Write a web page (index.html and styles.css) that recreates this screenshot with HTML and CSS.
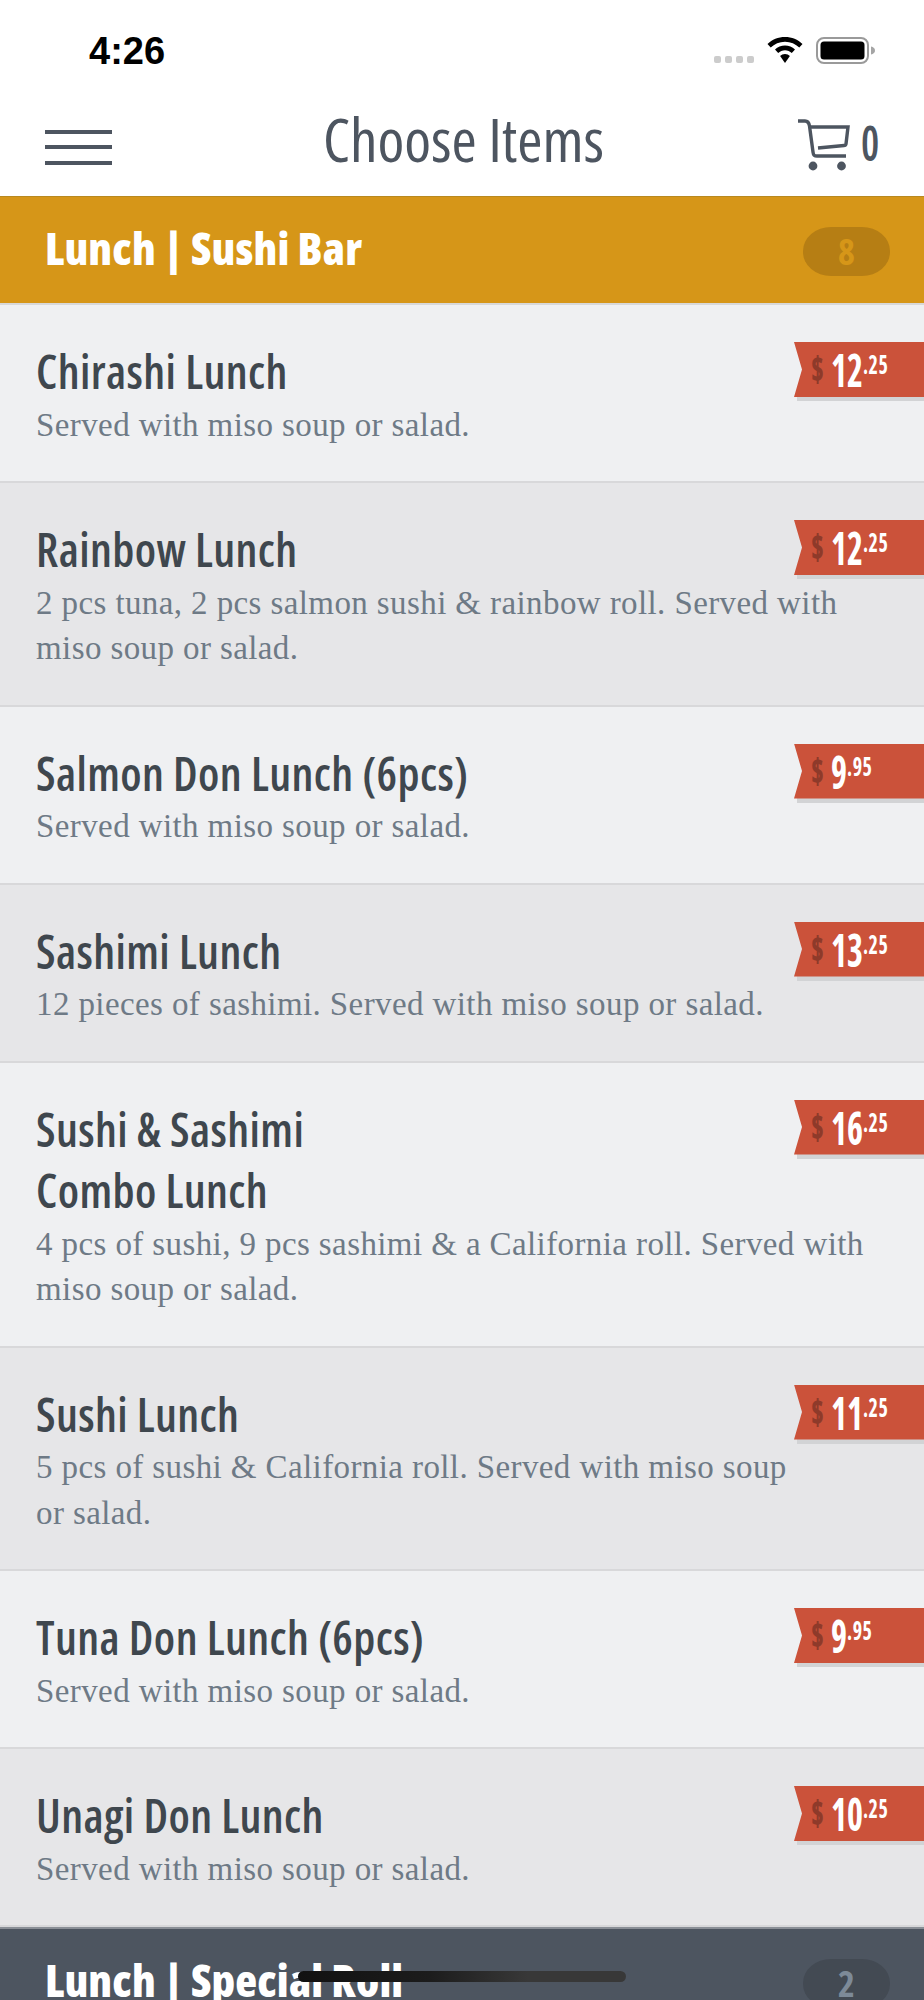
FILE: index.html
```html
<!DOCTYPE html>
<html lang="en">
<head>
<meta charset="utf-8">
<title>Choose Items</title>
<link rel="stylesheet" href="styles.css">
</head>
<body>
<div class="screen">
  <div class="status">
    <span class="time">4:26</span>
    <div class="status-icons">
      <span class="dots"><i></i><i></i><i></i><i></i></span>
      <svg class="wifi" width="36" height="26" viewBox="0 0 36 26"><path d="M18 0C11.200 0 5 2.600 .5 7L3.700 10.500C7.400 6.900 12.400 4.700 18 4.700S28.600 6.900 32.300 10.500L35.500 7C31 2.600 24.800 0 18 0Z" fill="#000"/><path d="M18 8.500C14.200 8.500 10.700 10 8 12.500L11.200 16C13 14.300 15.400 13.200 18 13.200S23 14.300 24.800 16L28 12.500C25.300 10 21.800 8.500 18 8.500Z" fill="#000"/><path d="M18 17C16.100 17 14.400 17.700 13.100 19L18 26L22.900 19C21.600 17.700 19.900 17 18 17Z" fill="#000"/></svg>
      <svg class="battery" width="60" height="28" viewBox="0 0 60 28"><rect x="1" y="1" width="51" height="25" rx="7" fill="none" stroke="#9a9a9a" stroke-width="2"/><rect x="4.500" y="4.500" width="44" height="18" rx="3.500" fill="#000"/><path d="M55 9.500C57.500 10 59 11.500 59 13.500S57.500 17 55 17.500Z" fill="#a5a5a5"/></svg>
    </div>
  </div>
  <header class="topbar">
    <div class="menu"><i></i><i></i><i></i></div>
    <h1 class="page-title"><span class="nar">Choose Items</span></h1>
    <div class="cart">
      <svg width="54" height="54" viewBox="0 0 54 54"><path d="M1 2H8C11 2 12 4 12.500 7L16 33C16.300 36 17 37 20 37H49" fill="none" stroke="#4d5560" stroke-width="3.400"/><path d="M13 8H51L49 25C48.800 26 48 26.500 47 26.500L21 29" fill="none" stroke="#4d5560" stroke-width="3.400"/><circle cx="16" cy="47" r="4.400" fill="#4d5560"/><circle cx="44.500" cy="47" r="4.400" fill="#4d5560"/></svg>
      <span class="nar cart-count">0</span>
    </div>
  </header>
  <section class="group gold">
    <span class="nar group-title">Lunch | Sushi Bar</span>
    <span class="count"><span class="nar">8</span></span>
  </section>
  <article class="item">
    <div class="item-name"><span class="nar">Chirashi Lunch</span></div>
    <p class="item-desc">Served with miso soup or salad.</p>
    <div class="price"><div class="ribbon"><span class="nar price-line"><span class="cur">$</span><b>12</b><sup>.25</sup></span></div></div>
  </article>
  <article class="item alt">
    <div class="item-name"><span class="nar">Rainbow Lunch</span></div>
    <p class="item-desc">2 pcs tuna, 2 pcs salmon sushi &amp; rainbow roll. Served with<br>miso soup or salad.</p>
    <div class="price"><div class="ribbon"><span class="nar price-line"><span class="cur">$</span><b>12</b><sup>.25</sup></span></div></div>
  </article>
  <article class="item">
    <div class="item-name"><span class="nar">Salmon Don Lunch (6pcs)</span></div>
    <p class="item-desc">Served with miso soup or salad.</p>
    <div class="price"><div class="ribbon"><span class="nar price-line"><span class="cur">$</span><b>9</b><sup>.95</sup></span></div></div>
  </article>
  <article class="item alt">
    <div class="item-name"><span class="nar">Sashimi Lunch</span></div>
    <p class="item-desc">12 pieces of sashimi. Served with miso soup or salad.</p>
    <div class="price"><div class="ribbon"><span class="nar price-line"><span class="cur">$</span><b>13</b><sup>.25</sup></span></div></div>
  </article>
  <article class="item">
    <div class="item-name"><span class="nar">Sushi &amp; Sashimi<br>Combo Lunch</span></div>
    <p class="item-desc">4 pcs of sushi, 9 pcs sashimi &amp; a California roll. Served with<br>miso soup or salad.</p>
    <div class="price"><div class="ribbon"><span class="nar price-line"><span class="cur">$</span><b>16</b><sup>.25</sup></span></div></div>
  </article>
  <article class="item alt">
    <div class="item-name"><span class="nar">Sushi Lunch</span></div>
    <p class="item-desc">5 pcs of sushi &amp; California roll. Served with miso soup<br>or salad.</p>
    <div class="price"><div class="ribbon"><span class="nar price-line"><span class="cur">$</span><b>11</b><sup>.25</sup></span></div></div>
  </article>
  <article class="item">
    <div class="item-name"><span class="nar">Tuna Don Lunch (6pcs)</span></div>
    <p class="item-desc">Served with miso soup or salad.</p>
    <div class="price"><div class="ribbon"><span class="nar price-line"><span class="cur">$</span><b>9</b><sup>.95</sup></span></div></div>
  </article>
  <article class="item alt">
    <div class="item-name"><span class="nar">Unagi Don Lunch</span></div>
    <p class="item-desc">Served with miso soup or salad.</p>
    <div class="price"><div class="ribbon"><span class="nar price-line"><span class="cur">$</span><b>10</b><sup>.25</sup></span></div></div>
  </article>
  <section class="group slate">
    <span class="nar group-title">Lunch | Special Roll</span>
    <span class="count"><span class="nar">2</span></span>
  </section>
  <div class="home-bar"></div>
</div>
</body>
</html>
```
FILE: styles.css
```css
* { box-sizing: border-box; }
html, body { margin: 0; padding: 0; background: #fff; }
.screen { position: relative; width: 924px; height: 2000px; overflow: hidden; font-family: "Open Sans", sans-serif; }
.nar { display: inline-block; font-family: "Open Sans", sans-serif; font-stretch: 75%; white-space: nowrap; }
.status { height: 98px; display: flex; justify-content: space-between; padding: 31px 48px 0 89px; }
.time { font-family: "Liberation Sans", sans-serif; font-weight: 700; font-size: 38px; line-height: 40px; color: #000; }
.status-icons { display: flex; align-items: flex-start; gap: 13px; padding-top: 6px; }
.dots { display: flex; gap: 4px; padding-top: 19px; }
.dots i { width: 7px; height: 7px; border-radius: 2px; background: #ccc; }
.topbar { height: 98px; display: grid; grid-template-columns: 1fr auto 1fr; align-items: center; padding: 0 42px 0 45px; }
.menu { display: flex; flex-direction: column; gap: 11.500px; width: 67px; }
.menu i { height: 4px; background: #4d5560; }
.page-title { margin: -16px 0 0; text-align: center; font-weight: 370; font-size: 61px; line-height: 70px; color: #4d5560; }
.cart { display: flex; align-items: flex-start; gap: 10px; justify-self: end; margin-top: -3px; }
.cart-count { font-size: 48px; font-weight: 600; color: #4d5560; line-height: 48px; transform: scaleX(.85); transform-origin: left; }
.group { height: 109px; display: flex; justify-content: space-between; padding: 30px 34px 0 45px; }
.gold { background: #d69618; border-top: 1px solid #b8891f; border-bottom: 2px solid #d8d8d8; }
.slate { background: #4d5560; border-top: 2px solid #8a8f96; }
.group-title { font-size: 45px; font-weight: 800; color: #fff; line-height: 42px; letter-spacing: .15px; }
.count { width: 87px; height: 49px; border-radius: 28px / 24px; display: flex; align-items: center; justify-content: center; font-size: 36px; font-weight: 700; line-height: 40px; }
.gold .count { background: #b67e14; color: #d69618; }
.slate .count { background: #434a53; color: #7d8a98; }
.item { position: relative; padding: 36px 36px 33px; background: #eff0f2; border-bottom: 2px solid #d8d8da; }
.item.alt { background: #e6e6e8; }
.item-name { font-size: 46px; font-weight: 600; line-height: 61.500px; color: #3f474e; letter-spacing: .4px; }
.item-desc { margin: 0; font-family: "Liberation Serif", serif; font-size: 33px; line-height: 45.500px; color: #6e7a86; letter-spacing: .4px; }
.price { position: absolute; right: 0; top: 37px; width: 130px; height: 60px; }
.price::before { content: ""; position: absolute; left: 3px; right: 0; top: 50px; height: 9px; background: #d2d3d5; }
.ribbon { position: relative; height: 55px; background: #cb523a; clip-path: polygon(0 0, 100% 0, 100% 100%, 0 100%, 8px 50%); color: #fff; padding-left: 17px; }
.price-line { display: flex; align-items: flex-start; transform: scaleX(.74); transform-origin: left; }
.cur { color: #8e3a2a; font-size: 35px; font-weight: 800; line-height: 35px; margin-top: 9px; width: 27px; }
.price b { font-size: 46px; font-weight: 700; line-height: 46px; margin-top: 4px; }
.price sup { font-size: 27px; font-weight: 700; line-height: 27px; margin-top: 8px; letter-spacing: .8px; vertical-align: baseline; }
.home-bar { position: absolute; left: 298px; top: 1971px; width: 328px; height: 11px; border-radius: 6px; background: linear-gradient(90deg, #111 0, #1c1c1c 40%, #383838 70%, #383838 100%); }
```
